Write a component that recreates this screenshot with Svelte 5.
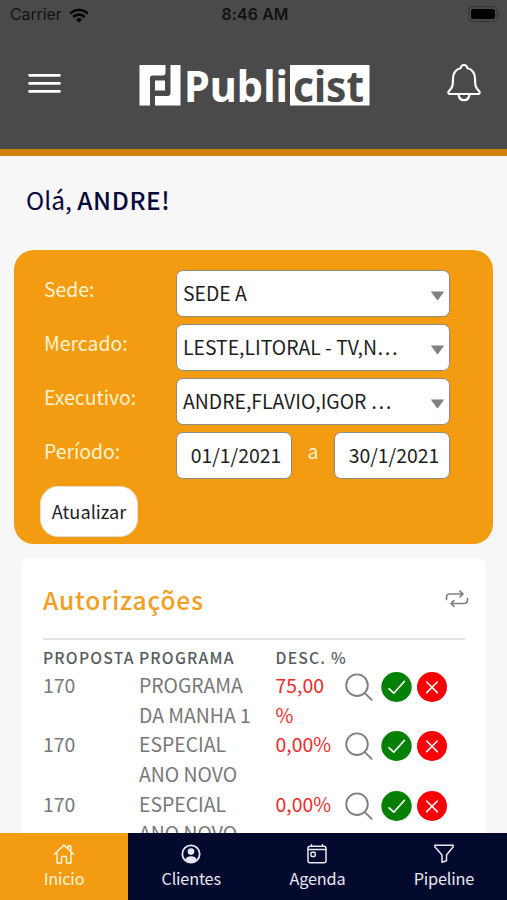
<script>
	let filters = [
		{ label: 'Sede:', value: 'SEDE A' },
		{ label: 'Mercado:', value: 'LESTE,LITORAL - TV,N…' },
		{ label: 'Executivo:', value: 'ANDRE,FLAVIO,IGOR …' }
	];

	let rows = [
		{ proposta: '170', programa: ['PROGRAMA', 'DA MANHA 1'], desc: ['75,00', '%'] },
		{ proposta: '170', programa: ['ESPECIAL', 'ANO NOVO'], desc: ['0,00%'] },
		{ proposta: '170', programa: ['ESPECIAL', 'ANO NOVO'], desc: ['0,00%'] }
	];

	let tabs = ['Inicio', 'Clientes', 'Agenda', 'Pipeline'];
	let active = 'Inicio';
</script>

<div class="screen">
	<header>
		<div class="status">
			<div class="carrier">
				<span>Carrier</span>
				<svg width="20" height="15" viewBox="0 0 20 15" fill="none" stroke="#000" stroke-width="2.6">
					<path d="M1.2 5.6a12.6 12.6 0 0 1 17.6 0" />
					<path d="M4.3 9a8.1 8.1 0 0 1 11.4 0" />
					<path d="M10 14.4l-3-3a4.3 4.3 0 0 1 6 0z" fill="#000" stroke="none" />
				</svg>
			</div>
			<strong>8:46 AM</strong>
			<svg class="battery" width="33" height="17" viewBox="0 0 33 17">
				<rect x="1.7" y=".7" width="28.5" height="14.6" rx="4.5" fill="none" stroke="#383838" stroke-width="1.2" />
				<rect x="4" y="3" width="24" height="10" rx="2.5" fill="#000" />
				<path d="M31.300 6v4.500q2-2.200 0-4.500z" fill="#383838" />
			</svg>
		</div>
		<div class="bar">
			<svg class="burger" width="33" height="21" viewBox="0 0 33 21" stroke="#fff" stroke-width="2.7" stroke-linecap="round">
				<path d="M1.5 2.3h30M1.5 10.4h30M1.5 18.4h30" />
			</svg>
			<svg class="logo" width="231" height="43" viewBox="0 0 231 43">
				<path fill="#fff" d="M.5 1H26.5V8.500q0 3-3 3H13.500q-2.500 0-2.500 2.500V41.500H.5zM31.500 1H41.500V41.500H16V32H28.500q3 0 3-3zM16 16.500H26V26.500H16z" />
				<text x="45" y="37.500" fill="#fff" textLength="104" lengthAdjust="spacingAndGlyphs">Publi</text>
				<rect x="151" y="1" width="79.500" height="40.500" fill="#fff" />
				<text x="154" y="37.500" fill="#4a4a4a" textLength="71" lengthAdjust="spacingAndGlyphs">cist</text>
			</svg>
			<svg class="bell" width="34" height="40" viewBox="0 0 34 40" fill="none" stroke="#fff" stroke-width="2.200" stroke-linejoin="round">
				<path d="M17 2c-2 0-3 1.200-3.300 3C8.500 6.500 6 10.500 6 15.500c0 7-.5 9-4 12.500-1.200 1.400-.6 3 1 3h28c1.600 0 2.200-1.600 1-3-3.500-3.500-4-5.500-4-12.500 0-5-2.500-9-7.700-10.500C20 3.200 19 2 17 2z" />
				<path d="M11.500 31.500c.5 3.800 2.700 5.700 5.500 5.700s5-1.900 5.500-5.700" />
			</svg>
		</div>
	</header>

	<main>
		<h1>Olá, <b>ANDRE!</b></h1>

		<section class="filters">
			{#each filters as f}
				<div class="row">
					<label for={f.label}>{f.label}</label>
					<button class="field" id={f.label}>
						<span>{f.value}</span>
						<svg width="15" height="10" viewBox="0 0 15 10"><path d="M.8.5h13.400L8 9q-.5.600-1 0z" fill="#808080" /></svg>
					</button>
				</div>
			{/each}
			<div class="row">
				<label for="inicio">Período:</label>
				<div class="period">
					<button class="field date" id="inicio">01/1/2021</button>
					<span class="sep">a</span>
					<button class="field date">30/1/2021</button>
				</div>
			</div>
			<button class="update">Atualizar</button>
		</section>

		<section class="card">
			<div class="title">
				<h2>Autorizações</h2>
				<svg width="24" height="18" viewBox="0 0 24 18" fill="none" stroke="#808080" stroke-width="1.700" stroke-linecap="round" stroke-linejoin="round">
					<path d="M1.500 9.500V7q0-3 3-3H18M15 1.200L18 4l-3 2.800" />
					<path d="M22.500 8.500V10q0 3.500-3.500 3.500H6M9 10.700l-3 2.800 3 2.800" />
				</svg>
			</div>
			<div class="grid head">
				<span>PROPOSTA</span>
				<span>PROGRAMA</span>
				<span>DESC. %</span>
			</div>
			{#each rows as row}
				<div class="grid line">
					<span>{row.proposta}</span>
					<span>{#each row.programa as part}<span class="part">{part}</span>{/each}</span>
					<span class="desc">{#each row.desc as part}<span class="part">{part}</span>{/each}</span>
					<div class="actions">
						<svg width="28" height="30" viewBox="0 0 28 30" fill="none" stroke="#808080" stroke-width="1.900" stroke-linecap="round">
							<circle cx="12" cy="13.200" r="10.800" />
							<path d="M19.600 20.900l7 7" />
						</svg>
						<svg width="31" height="30" viewBox="0 0 31 30" fill="none" stroke="#fff" stroke-width="1.700" stroke-linecap="round" stroke-linejoin="round">
							<ellipse cx="15.500" cy="15" rx="15.200" ry="15" fill="#048004" stroke="none" />
							<path d="M8 16.800l4.800 4.400L23.500 9.300" />
						</svg>
						<svg width="30" height="30" viewBox="0 0 30 30" fill="none" stroke="#fff" stroke-width="1.600" stroke-linecap="round">
							<circle cx="15" cy="15" r="15" fill="#fb0007" stroke="none" />
							<path d="M9.700 10l10.600 10.600M20.300 10L9.700 20.600" />
						</svg>
					</div>
				</div>
			{/each}
		</section>
	</main>

	<nav>
		{#each tabs as tab}
			<button class:active={tab === active} on:click={() => (active = tab)}>
				<svg width="22" height="22" viewBox="0 0 22 22" fill="none" stroke="currentColor" stroke-width="1.500" stroke-linecap="round" stroke-linejoin="round">
					{#if tab === 'Inicio'}
						<path d="M1.500 11.200L11 2l9.500 9.200M4 9.500V20h4.500v-5.500q0-1 1-1h3q1 0 1 1V20H18V9.500M15.200 5.800V2.700h2.600v5.500" />
					{:else if tab === 'Clientes'}
						<circle cx="11" cy="11" r="8.700" stroke-width="1.800" />
						<circle cx="11" cy="8.600" r="3.300" fill="currentColor" stroke="none" />
						<path d="M5.200 16.800c.6-2.500 3-3.600 5.800-3.600s5.200 1.100 5.800 3.600q-2.400 2.700-5.800 2.700t-5.800-2.700z" fill="currentColor" stroke="none" />
					{:else if tab === 'Agenda'}
						<rect x="2" y="3.200" width="18" height="16.500" rx="2" />
						<path d="M2 6.500h18M5.500 1.800v1.400M16.500 1.800v1.400" />
						<rect x="5" y="9.300" width="4.200" height="4.200" rx="1" />
					{:else}
						<path d="M1.800 2.200h18.400v1.600L13.500 12v5.700L9 19.200V12L1.800 3.800z" />
					{/if}
				</svg>
				<span>{tab}</span>
			</button>
		{/each}
	</nav>
</div>

<style>
	:global(body) {
		background: #f7f7f7;
	}

	.screen {
		height: 900px;
		display: flex;
		flex-direction: column;
		overflow: hidden;
		font-family: "Noto Sans CJK SC", "Open Sans", sans-serif;
		font-size: 19.400px;
	}

	button {
		font: inherit;
		padding: 0;
		border: 0;
		color: inherit;
		background: none;
	}

	svg {
		display: block;
		flex: none;
	}

	header {
		height: 149px;
		flex: none;
		background: #4a4a4a;
		border-bottom: 7px solid #d4820f;
	}

	.status {
		height: 30px;
		display: grid;
		grid-template-columns: 1fr auto 1fr;
		align-items: center;
		padding: 0 7px 0 10px;
		font: 15.800px/30px Inter, sans-serif;
		color: #111;
	}

	.status strong {
		font-weight: 600;
		letter-spacing: .2px;
	}

	.carrier {
		display: flex;
		align-items: center;
		gap: 7px;
	}

	.battery {
		justify-self: end;
		margin-top: -2px;
	}

	.bar {
		display: flex;
		align-items: center;
		padding: 34px 26px 0 28px;
	}

	.burger {
		margin-top: -4px;
	}

	.logo {
		margin-left: 78px;
		overflow: visible;
		font: bold 43.500px "Noto Sans", sans-serif;
	}

	.bell {
		margin: -5px 0 0 auto;
	}

	main {
		flex: 1;
		min-height: 0;
		overflow: hidden;
	}

	h1 {
		margin: 26px 0 0 26px;
		font-size: 24.500px;
		line-height: 36px;
		font-weight: 400;
		color: #05083a;
	}

	h1 b {
		font-weight: 500;
		letter-spacing: .6px;
	}

	.filters {
		box-sizing: border-box;
		height: 294px;
		margin: 32px 14px 0;
		padding: 20px 43px 0 30px;
		border-radius: 20px;
		background: #f39c12;
	}

	.row {
		display: flex;
		margin-bottom: 7px;
	}

	.row label {
		width: 132px;
		line-height: 37px;
		color: #fff3d0;
	}

	.field {
		box-sizing: border-box;
		width: 274px;
		height: 47px;
		display: flex;
		align-items: center;
		justify-content: space-between;
		padding: 0 4px 2px 6px;
		border: 1.500px solid #8c8c84;
		border-radius: 7px;
		background: #fff;
		color: #1d1d1d;
	}

	.field svg {
		margin-top: 6px;
	}

	.period {
		width: 274px;
		display: flex;
		justify-content: space-between;
	}

	.date {
		width: 116px;
		justify-content: center;
		padding: 0 0 2px 4px;
	}

	.sep {
		line-height: 37px;
		color: #fff3d0;
	}

	.update {
		display: block;
		width: 98px;
		height: 51px;
		margin-left: -4px;
		padding-bottom: 2px;
		border: 1px solid #e4e0d8;
		border-radius: 18px;
		background: #fff;
		color: #1d1d1d;
		font-size: 18.200px;
	}

	.card {
		margin: 14px 21px 0 22px;
		padding: 20px 21px 0;
		border-radius: 7px;
		background: #fff;
		height: 400px;
	}

	.title {
		height: 60px;
		display: flex;
		justify-content: space-between;
		border-bottom: 2px solid #e2e2e2;
	}

	.title svg {
		margin: 12px -4px 0 0;
	}

	h2 {
		margin: -1px 0 0;
		font-size: 24.500px;
		line-height: 46px;
		font-weight: 500;
		letter-spacing: .9px;
		color: #f0a01e;
	}

	.grid {
		display: grid;
		grid-template-columns: 96px 136.500px 69px 1fr;
	}

	.head {
		height: 30px;
		font-size: 15.700px;
		line-height: 35px;
		font-weight: 500;
		letter-spacing: 1.200px;
		white-space: nowrap;
		color: #555b5e;
	}

	.line {
		height: 59.400px;
		line-height: 29.600px;
		color: #777;
	}

	.part {
		display: block;
	}

	.desc {
		color: #ee2b2b;
	}

	.actions {
		display: flex;
		height: 30px;
		padding-top: 2px;
	}

	.actions svg + svg {
		margin-left: 8px;
	}

	.actions svg:last-child {
		margin-left: 5px;
	}

	nav {
		height: 67px;
		flex: none;
		display: grid;
		grid-template-columns: 128px repeat(3, 1fr);
		background: #030a2e;
		color: #e6e7f2;
	}

	nav button {
		display: flex;
		flex-direction: column;
		align-items: center;
		padding-top: 10px;
		font-size: 16.300px;
		line-height: 27px;
		letter-spacing: -.2px;
	}

	nav .active {
		background: #f39c12;
		color: #fff3d8;
	}
</style>
